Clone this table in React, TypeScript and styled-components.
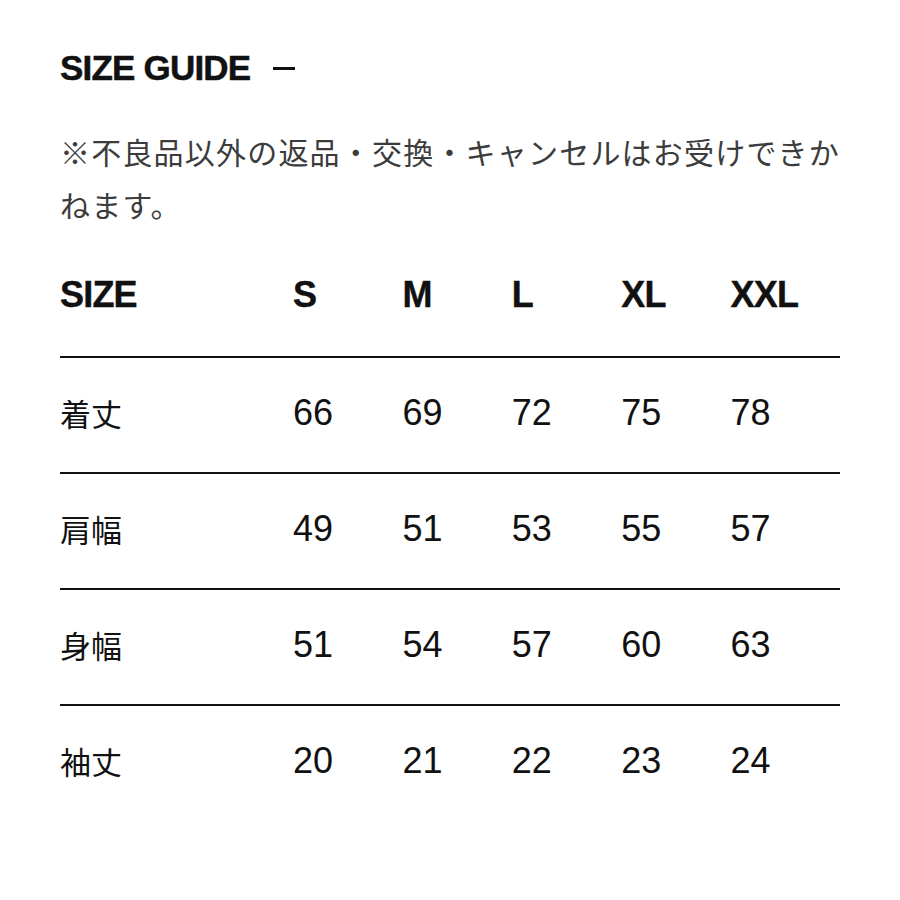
import styled, { createGlobalStyle } from 'styled-components';

const GlobalStyle = createGlobalStyle`
  html, body {
    margin: 0;
    padding: 0;
    background: #ffffff;
  }
  body {
    font-family: "Liberation Sans", "Noto Sans CJK JP", sans-serif;
    color: #111111;
  }
`;

const Page = styled.div`
  width: 900px;
  height: 900px;
  box-sizing: border-box;
  padding: 47px 60px 0 60px;
`;

const TitleRow = styled.div`
  display: flex;
  align-items: center;
  gap: 23px;
  height: 42px;
`;

const Title = styled.h1`
  margin: 0;
  font-size: 35px;
  line-height: 42px;
  font-weight: 700;
  letter-spacing: -0.8px;
  -webkit-text-stroke: 0.5px #111111;
  color: #111111;
`;

const Minus = styled.span`
  display: inline-block;
  width: 22px;
  height: 3px;
  background: #111111;
  margin-top: 1px;
`;

const Note = styled.p`
  margin: 36px 0 44px 0;
  font-family: "Noto Sans CJK JP", sans-serif;
  font-size: 30px;
  letter-spacing: 1.2px;
  line-height: 53px;
  color: #3c3c3c;
`;

const Table = styled.div`
  display: flex;
  flex-direction: column;
`;

const Row = styled.div<{ $head?: boolean; $last?: boolean }>`
  display: grid;
  grid-template-columns: 233px repeat(5, 1fr);
  align-items: center;
  padding: ${(p) => (p.$head ? '0 0 41px 0' : '35px 0 39px 0')};
  border-bottom: ${(p) => (p.$last ? 'none' : '2px solid #111111')};
`;

const Cell = styled.div<{ $head?: boolean; $label?: boolean }>`
  font-family: ${(p) =>
    p.$label ? '"Noto Sans CJK JP", sans-serif' : '"Liberation Sans", sans-serif'};
  font-size: ${(p) => (p.$label ? '31px' : '36px')};
  line-height: 40px;
  font-weight: ${(p) => (p.$head ? 700 : 400)};
  letter-spacing: ${(p) => (p.$head ? '-0.8px' : '0')};
  -webkit-text-stroke: ${(p) => (p.$head ? '0.4px #111111' : '0')};
  color: #111111;
`;

const sizes = ['S', 'M', 'L', 'XL', 'XXL'];

const rows: { label: string; values: number[] }[] = [
  { label: '着丈', values: [66, 69, 72, 75, 78] },
  { label: '肩幅', values: [49, 51, 53, 55, 57] },
  { label: '身幅', values: [51, 54, 57, 60, 63] },
  { label: '袖丈', values: [20, 21, 22, 23, 24] },
];

export default function App() {
  return (
    <>
      <GlobalStyle />
      <Page>
        <TitleRow>
          <Title>SIZE GUIDE</Title>
          <Minus />
        </TitleRow>
        <Note>※不良品以外の返品・交換・キャンセルはお受けできかねます。</Note>
        <Table>
          <Row $head>
            <Cell $head>SIZE</Cell>
            {sizes.map((s) => (
              <Cell $head key={s}>
                {s}
              </Cell>
            ))}
          </Row>
          {rows.map((r, i) => (
            <Row key={r.label} $last={i === rows.length - 1}>
              <Cell $label>{r.label}</Cell>
              {r.values.map((v, j) => (
                <Cell key={j}>{v}</Cell>
              ))}
            </Row>
          ))}
        </Table>
      </Page>
    </>
  );
}
